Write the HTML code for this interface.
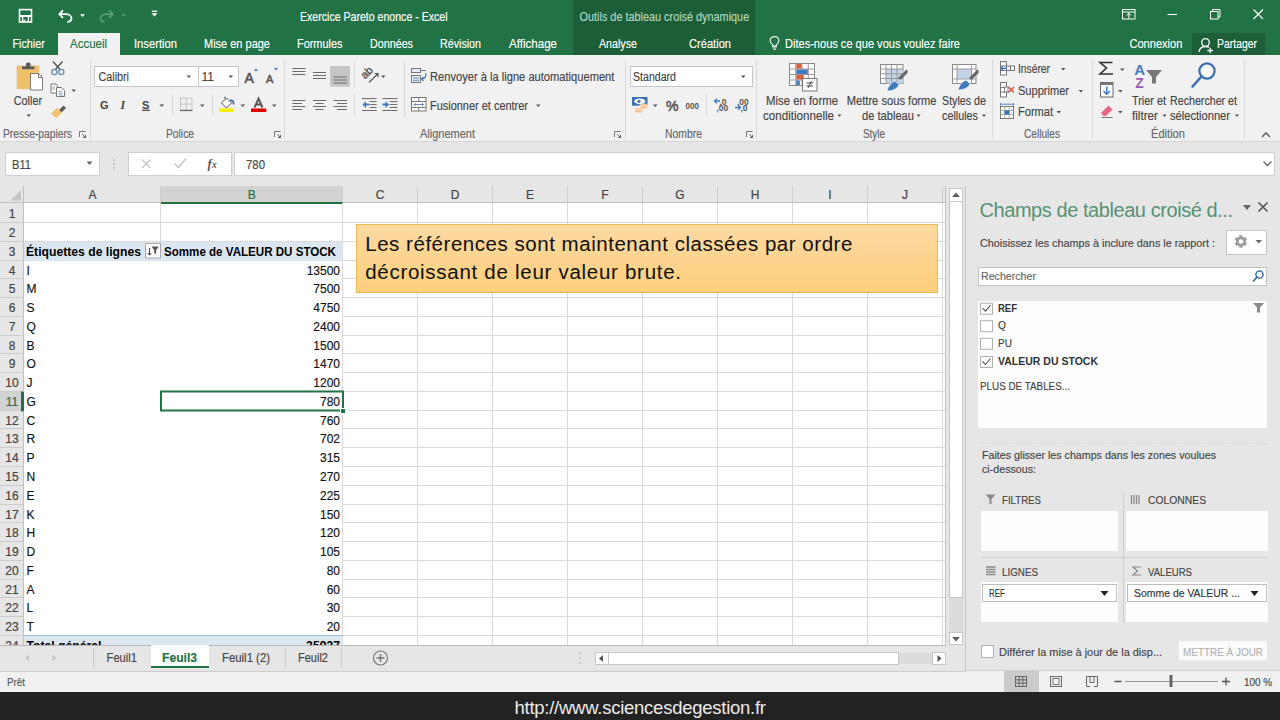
<!DOCTYPE html>
<html><head><meta charset="utf-8">
<style>
*{margin:0;padding:0}
html,body{width:1280px;height:720px;overflow:hidden;background:#e6e6e6}
svg{display:block;font-family:"Liberation Sans",sans-serif}
</style></head><body>
<svg width="1280" height="720" viewBox="0 0 1280 720">
<rect x="0" y="0" width="1280" height="55" fill="#217346"/>
<rect x="573.5" y="0" width="181.5" height="55" fill="#1b5e37"/>
<rect x="58" y="33" width="62" height="22" fill="#f1f1f1"/>
<rect x="1192" y="33" width="73" height="22" fill="#1b5e37"/>
<text x="300.00" y="21.00" font-size="12.5" fill="#ffffff" font-weight="normal" font-style="normal" textLength="147.52" lengthAdjust="spacingAndGlyphs" stroke="#ffffff" stroke-width="0.15">Exercice Pareto enonce - Excel</text>
<text x="579.60" y="20.70" font-size="12" fill="#b3d9c0" font-weight="normal" font-style="normal" textLength="169.61" lengthAdjust="spacingAndGlyphs" stroke="#b3d9c0" stroke-width="0.15">Outils de tableau croisé dynamique</text>
<text x="12.50" y="47.70" font-size="12.5" fill="#ffffff" font-weight="normal" font-style="normal" textLength="32.26" lengthAdjust="spacingAndGlyphs" stroke="#ffffff" stroke-width="0.15">Fichier</text>
<text x="134.00" y="47.70" font-size="12.5" fill="#ffffff" font-weight="normal" font-style="normal" textLength="43.01" lengthAdjust="spacingAndGlyphs" stroke="#ffffff" stroke-width="0.15">Insertion</text>
<text x="204.00" y="47.70" font-size="12.5" fill="#ffffff" font-weight="normal" font-style="normal" textLength="65.99" lengthAdjust="spacingAndGlyphs" stroke="#ffffff" stroke-width="0.15">Mise en page</text>
<text x="297.00" y="47.70" font-size="12.5" fill="#ffffff" font-weight="normal" font-style="normal" textLength="45.47" lengthAdjust="spacingAndGlyphs" stroke="#ffffff" stroke-width="0.15">Formules</text>
<text x="370.00" y="47.70" font-size="12.5" fill="#ffffff" font-weight="normal" font-style="normal" textLength="42.98" lengthAdjust="spacingAndGlyphs" stroke="#ffffff" stroke-width="0.15">Données</text>
<text x="440.00" y="47.70" font-size="12.5" fill="#ffffff" font-weight="normal" font-style="normal" textLength="41.00" lengthAdjust="spacingAndGlyphs" stroke="#ffffff" stroke-width="0.15">Révision</text>
<text x="509.00" y="47.70" font-size="12.5" fill="#ffffff" font-weight="normal" font-style="normal" textLength="48.02" lengthAdjust="spacingAndGlyphs" stroke="#ffffff" stroke-width="0.15">Affichage</text>
<text x="599.00" y="47.70" font-size="12.5" fill="#ffffff" font-weight="normal" font-style="normal" textLength="37.98" lengthAdjust="spacingAndGlyphs" stroke="#ffffff" stroke-width="0.15">Analyse</text>
<text x="689.00" y="47.70" font-size="12.5" fill="#ffffff" font-weight="normal" font-style="normal" textLength="42.00" lengthAdjust="spacingAndGlyphs" stroke="#ffffff" stroke-width="0.15">Création</text>
<text x="1129.50" y="47.70" font-size="12.5" fill="#ffffff" font-weight="normal" font-style="normal" textLength="52.82" lengthAdjust="spacingAndGlyphs" stroke="#ffffff" stroke-width="0.15">Connexion</text>
<text x="1217.00" y="47.70" font-size="12.5" fill="#ffffff" font-weight="normal" font-style="normal" textLength="40.01" lengthAdjust="spacingAndGlyphs" stroke="#ffffff" stroke-width="0.15">Partager</text>
<text x="70.00" y="47.70" font-size="12.5" fill="#217346" font-weight="normal" font-style="normal" textLength="36.99" lengthAdjust="spacingAndGlyphs" stroke="#217346" stroke-width="0.15">Accueil</text>
<text x="785.00" y="47.70" font-size="12.5" fill="#ffffff" font-weight="normal" font-style="normal" textLength="175.02" lengthAdjust="spacingAndGlyphs" stroke="#ffffff" stroke-width="0.15">Dites-nous ce que vous voulez faire</text>
<rect x="0" y="55" width="1280" height="86" fill="#f1f1f1"/>
<line x1="0" y1="141.5" x2="1280" y2="141.5" stroke="#d6d6d6" stroke-width="1"/>
<line x1="90.5" y1="60" x2="90.5" y2="139" stroke="#dadada" stroke-width="1"/>
<line x1="284.5" y1="60" x2="284.5" y2="139" stroke="#dadada" stroke-width="1"/>
<line x1="625.5" y1="60" x2="625.5" y2="139" stroke="#dadada" stroke-width="1"/>
<line x1="756.5" y1="60" x2="756.5" y2="139" stroke="#dadada" stroke-width="1"/>
<line x1="992.5" y1="60" x2="992.5" y2="139" stroke="#dadada" stroke-width="1"/>
<line x1="1092.5" y1="60" x2="1092.5" y2="139" stroke="#dadada" stroke-width="1"/>
<line x1="1244.5" y1="60" x2="1244.5" y2="139" stroke="#dadada" stroke-width="1"/>
<text x="3.00" y="137.50" font-size="12" fill="#666666" font-weight="normal" font-style="normal" textLength="69.00" lengthAdjust="spacingAndGlyphs" stroke="#666666" stroke-width="0.15">Presse-papiers</text>
<text x="166.00" y="137.50" font-size="12" fill="#666666" font-weight="normal" font-style="normal" textLength="27.99" lengthAdjust="spacingAndGlyphs" stroke="#666666" stroke-width="0.15">Police</text>
<text x="420.00" y="137.50" font-size="12" fill="#666666" font-weight="normal" font-style="normal" textLength="54.98" lengthAdjust="spacingAndGlyphs" stroke="#666666" stroke-width="0.15">Alignement</text>
<text x="665.00" y="137.50" font-size="12" fill="#666666" font-weight="normal" font-style="normal" textLength="37.02" lengthAdjust="spacingAndGlyphs" stroke="#666666" stroke-width="0.15">Nombre</text>
<text x="863.00" y="137.50" font-size="12" fill="#666666" font-weight="normal" font-style="normal" textLength="21.98" lengthAdjust="spacingAndGlyphs" stroke="#666666" stroke-width="0.15">Style</text>
<text x="1024.00" y="137.50" font-size="12" fill="#666666" font-weight="normal" font-style="normal" textLength="36.02" lengthAdjust="spacingAndGlyphs" stroke="#666666" stroke-width="0.15">Cellules</text>
<text x="1151.00" y="137.50" font-size="12" fill="#666666" font-weight="normal" font-style="normal" textLength="33.97" lengthAdjust="spacingAndGlyphs" stroke="#666666" stroke-width="0.15">Édition</text>
<rect x="94.5" y="66.5" width="104" height="20" fill="#ffffff" stroke="#c6c6c6"/>
<rect x="198.5" y="66.5" width="40" height="20" fill="#ffffff" stroke="#c6c6c6"/>
<rect x="630.5" y="66.5" width="122" height="20" fill="#ffffff" stroke="#c6c6c6"/>
<text x="98.50" y="80.50" font-size="12" fill="#444444" font-weight="normal" font-style="normal" textLength="30.49" lengthAdjust="spacingAndGlyphs" stroke="#444444" stroke-width="0.15">Calibri</text>
<text x="201.50" y="80.50" font-size="12" fill="#444444" font-weight="normal" font-style="normal" textLength="12.46" lengthAdjust="spacingAndGlyphs" stroke="#444444" stroke-width="0.15">11</text>
<text x="633.00" y="80.50" font-size="12" fill="#444444" font-weight="normal" font-style="normal" textLength="42.99" lengthAdjust="spacingAndGlyphs" stroke="#444444" stroke-width="0.15">Standard</text>
<text x="13.75" y="104.70" font-size="12" fill="#444444" font-weight="normal" font-style="normal" textLength="28.27" lengthAdjust="spacingAndGlyphs" stroke="#444444" stroke-width="0.15">Coller</text>
<text x="430.00" y="80.80" font-size="12" fill="#444444" font-weight="normal" font-style="normal" textLength="184.41" lengthAdjust="spacingAndGlyphs" stroke="#444444" stroke-width="0.15">Renvoyer à la ligne automatiquement</text>
<text x="430.00" y="109.70" font-size="12" fill="#444444" font-weight="normal" font-style="normal" textLength="97.99" lengthAdjust="spacingAndGlyphs" stroke="#444444" stroke-width="0.15">Fusionner et centrer</text>
<text x="766.00" y="104.80" font-size="12" fill="#444444" font-weight="normal" font-style="normal" textLength="72.01" lengthAdjust="spacingAndGlyphs" stroke="#444444" stroke-width="0.15">Mise en forme</text>
<text x="763.00" y="119.50" font-size="12" fill="#444444" font-weight="normal" font-style="normal" textLength="71.01" lengthAdjust="spacingAndGlyphs" stroke="#444444" stroke-width="0.15">conditionnelle</text>
<text x="846.70" y="104.80" font-size="12" fill="#444444" font-weight="normal" font-style="normal" textLength="89.88" lengthAdjust="spacingAndGlyphs" stroke="#444444" stroke-width="0.15">Mettre sous forme</text>
<text x="862.00" y="119.50" font-size="12" fill="#444444" font-weight="normal" font-style="normal" textLength="52.01" lengthAdjust="spacingAndGlyphs" stroke="#444444" stroke-width="0.15">de tableau</text>
<text x="942.00" y="104.80" font-size="12" fill="#444444" font-weight="normal" font-style="normal" textLength="43.98" lengthAdjust="spacingAndGlyphs" stroke="#444444" stroke-width="0.15">Styles de</text>
<text x="942.00" y="119.50" font-size="12" fill="#444444" font-weight="normal" font-style="normal" textLength="36.00" lengthAdjust="spacingAndGlyphs" stroke="#444444" stroke-width="0.15">cellules</text>
<text x="1018.00" y="72.80" font-size="12" fill="#444444" font-weight="normal" font-style="normal" textLength="32.02" lengthAdjust="spacingAndGlyphs" stroke="#444444" stroke-width="0.15">Insérer</text>
<text x="1018.00" y="94.50" font-size="12" fill="#444444" font-weight="normal" font-style="normal" textLength="50.98" lengthAdjust="spacingAndGlyphs" stroke="#444444" stroke-width="0.15">Supprimer</text>
<text x="1018.00" y="116.00" font-size="12" fill="#444444" font-weight="normal" font-style="normal" textLength="35.02" lengthAdjust="spacingAndGlyphs" stroke="#444444" stroke-width="0.15">Format</text>
<text x="1132.00" y="104.80" font-size="12" fill="#444444" font-weight="normal" font-style="normal" textLength="34.00" lengthAdjust="spacingAndGlyphs" stroke="#444444" stroke-width="0.15">Trier et</text>
<text x="1132.00" y="119.50" font-size="12" fill="#444444" font-weight="normal" font-style="normal" textLength="26.03" lengthAdjust="spacingAndGlyphs" stroke="#444444" stroke-width="0.15">filtrer</text>
<text x="1170.00" y="104.80" font-size="12" fill="#444444" font-weight="normal" font-style="normal" textLength="67.01" lengthAdjust="spacingAndGlyphs" stroke="#444444" stroke-width="0.15">Rechercher et</text>
<text x="1170.00" y="119.50" font-size="12" fill="#444444" font-weight="normal" font-style="normal" textLength="60.03" lengthAdjust="spacingAndGlyphs" stroke="#444444" stroke-width="0.15">sélectionner</text>
<rect x="0" y="142" width="1280" height="44" fill="#e6e6e6"/>
<rect x="5.5" y="152.5" width="94" height="23" fill="#ffffff" stroke="#d0d0d0"/>
<rect x="128.5" y="152.5" width="103" height="23" fill="#ffffff" stroke="#d0d0d0"/>
<rect x="234.5" y="152.5" width="1040" height="23" fill="#ffffff" stroke="#d0d0d0"/>
<text x="12.00" y="168.50" font-size="12.5" fill="#444444" font-weight="normal" font-style="normal" textLength="19.00" lengthAdjust="spacingAndGlyphs" stroke="#444444" stroke-width="0.15">B11</text>
<text x="246.00" y="168.50" font-size="12.5" fill="#444444" font-weight="normal" font-style="normal" textLength="18.98" lengthAdjust="spacingAndGlyphs" stroke="#444444" stroke-width="0.15">780</text>
<rect x="0" y="186" width="946" height="459" fill="#ffffff"/>
<rect x="0" y="186" width="946" height="17" fill="#e6e6e6"/>
<rect x="161" y="186" width="181.5" height="17" fill="#d2d2d2"/>
<line x1="160.5" y1="186" x2="160.5" y2="203" stroke="#cfcfcf" stroke-width="1"/>
<line x1="342.5" y1="186" x2="342.5" y2="203" stroke="#cfcfcf" stroke-width="1"/>
<line x1="417.5" y1="186" x2="417.5" y2="203" stroke="#cfcfcf" stroke-width="1"/>
<line x1="492.5" y1="186" x2="492.5" y2="203" stroke="#cfcfcf" stroke-width="1"/>
<line x1="567.5" y1="186" x2="567.5" y2="203" stroke="#cfcfcf" stroke-width="1"/>
<line x1="642.5" y1="186" x2="642.5" y2="203" stroke="#cfcfcf" stroke-width="1"/>
<line x1="717.5" y1="186" x2="717.5" y2="203" stroke="#cfcfcf" stroke-width="1"/>
<line x1="792.5" y1="186" x2="792.5" y2="203" stroke="#cfcfcf" stroke-width="1"/>
<line x1="867.5" y1="186" x2="867.5" y2="203" stroke="#cfcfcf" stroke-width="1"/>
<line x1="942.5" y1="186" x2="942.5" y2="203" stroke="#cfcfcf" stroke-width="1"/>
<line x1="0" y1="202.5" x2="946" y2="202.5" stroke="#bdbdbd" stroke-width="1"/>
<line x1="161" y1="203" x2="342.5" y2="203" stroke="#217346" stroke-width="2"/>
<text x="92.5" y="199" font-size="12" fill="#444" stroke="#444" stroke-width="0.2" text-anchor="middle">A</text>
<text x="251.75" y="199" font-size="12" fill="#217346" stroke="#217346" stroke-width="0.2" text-anchor="middle">B</text>
<text x="380.0" y="199" font-size="12" fill="#444" stroke="#444" stroke-width="0.2" text-anchor="middle">C</text>
<text x="455.0" y="199" font-size="12" fill="#444" stroke="#444" stroke-width="0.2" text-anchor="middle">D</text>
<text x="530.0" y="199" font-size="12" fill="#444" stroke="#444" stroke-width="0.2" text-anchor="middle">E</text>
<text x="605.0" y="199" font-size="12" fill="#444" stroke="#444" stroke-width="0.2" text-anchor="middle">F</text>
<text x="680.0" y="199" font-size="12" fill="#444" stroke="#444" stroke-width="0.2" text-anchor="middle">G</text>
<text x="755.0" y="199" font-size="12" fill="#444" stroke="#444" stroke-width="0.2" text-anchor="middle">H</text>
<text x="830.0" y="199" font-size="12" fill="#444" stroke="#444" stroke-width="0.2" text-anchor="middle">I</text>
<text x="905.0" y="199" font-size="12" fill="#444" stroke="#444" stroke-width="0.2" text-anchor="middle">J</text>
<rect x="0" y="203" width="24" height="442" fill="#e6e6e6"/>
<line x1="23.5" y1="186" x2="23.5" y2="645" stroke="#c0c0c0" stroke-width="1"/>
<path d="M10.5 200.5 L21 190 L21 200.5 Z" fill="#c4c4c4"/>
<rect x="0" y="392" width="23" height="19" fill="#d2d2d2"/>
<line x1="0" y1="222.5" x2="23" y2="222.5" stroke="#cdcdcd" stroke-width="1"/>
<line x1="24" y1="222.5" x2="946" y2="222.5" stroke="#dadada" stroke-width="1"/>
<line x1="0" y1="241.5" x2="23" y2="241.5" stroke="#cdcdcd" stroke-width="1"/>
<line x1="24" y1="241.5" x2="946" y2="241.5" stroke="#dadada" stroke-width="1"/>
<line x1="0" y1="260.5" x2="23" y2="260.5" stroke="#cdcdcd" stroke-width="1"/>
<line x1="342.5" y1="260.5" x2="946" y2="260.5" stroke="#dadada" stroke-width="1"/>
<line x1="0" y1="278.5" x2="23" y2="278.5" stroke="#cdcdcd" stroke-width="1"/>
<line x1="342.5" y1="278.5" x2="946" y2="278.5" stroke="#dadada" stroke-width="1"/>
<line x1="0" y1="297.5" x2="23" y2="297.5" stroke="#cdcdcd" stroke-width="1"/>
<line x1="342.5" y1="297.5" x2="946" y2="297.5" stroke="#dadada" stroke-width="1"/>
<line x1="0" y1="316.5" x2="23" y2="316.5" stroke="#cdcdcd" stroke-width="1"/>
<line x1="342.5" y1="316.5" x2="946" y2="316.5" stroke="#dadada" stroke-width="1"/>
<line x1="0" y1="335.5" x2="23" y2="335.5" stroke="#cdcdcd" stroke-width="1"/>
<line x1="342.5" y1="335.5" x2="946" y2="335.5" stroke="#dadada" stroke-width="1"/>
<line x1="0" y1="353.5" x2="23" y2="353.5" stroke="#cdcdcd" stroke-width="1"/>
<line x1="342.5" y1="353.5" x2="946" y2="353.5" stroke="#dadada" stroke-width="1"/>
<line x1="0" y1="372.5" x2="23" y2="372.5" stroke="#cdcdcd" stroke-width="1"/>
<line x1="342.5" y1="372.5" x2="946" y2="372.5" stroke="#dadada" stroke-width="1"/>
<line x1="0" y1="391.5" x2="23" y2="391.5" stroke="#cdcdcd" stroke-width="1"/>
<line x1="342.5" y1="391.5" x2="946" y2="391.5" stroke="#dadada" stroke-width="1"/>
<line x1="0" y1="410.5" x2="23" y2="410.5" stroke="#cdcdcd" stroke-width="1"/>
<line x1="342.5" y1="410.5" x2="946" y2="410.5" stroke="#dadada" stroke-width="1"/>
<line x1="0" y1="428.5" x2="23" y2="428.5" stroke="#cdcdcd" stroke-width="1"/>
<line x1="342.5" y1="428.5" x2="946" y2="428.5" stroke="#dadada" stroke-width="1"/>
<line x1="0" y1="447.5" x2="23" y2="447.5" stroke="#cdcdcd" stroke-width="1"/>
<line x1="342.5" y1="447.5" x2="946" y2="447.5" stroke="#dadada" stroke-width="1"/>
<line x1="0" y1="466.5" x2="23" y2="466.5" stroke="#cdcdcd" stroke-width="1"/>
<line x1="342.5" y1="466.5" x2="946" y2="466.5" stroke="#dadada" stroke-width="1"/>
<line x1="0" y1="485.5" x2="23" y2="485.5" stroke="#cdcdcd" stroke-width="1"/>
<line x1="342.5" y1="485.5" x2="946" y2="485.5" stroke="#dadada" stroke-width="1"/>
<line x1="0" y1="504.5" x2="23" y2="504.5" stroke="#cdcdcd" stroke-width="1"/>
<line x1="342.5" y1="504.5" x2="946" y2="504.5" stroke="#dadada" stroke-width="1"/>
<line x1="0" y1="522.5" x2="23" y2="522.5" stroke="#cdcdcd" stroke-width="1"/>
<line x1="342.5" y1="522.5" x2="946" y2="522.5" stroke="#dadada" stroke-width="1"/>
<line x1="0" y1="541.5" x2="23" y2="541.5" stroke="#cdcdcd" stroke-width="1"/>
<line x1="342.5" y1="541.5" x2="946" y2="541.5" stroke="#dadada" stroke-width="1"/>
<line x1="0" y1="560.5" x2="23" y2="560.5" stroke="#cdcdcd" stroke-width="1"/>
<line x1="342.5" y1="560.5" x2="946" y2="560.5" stroke="#dadada" stroke-width="1"/>
<line x1="0" y1="579.5" x2="23" y2="579.5" stroke="#cdcdcd" stroke-width="1"/>
<line x1="342.5" y1="579.5" x2="946" y2="579.5" stroke="#dadada" stroke-width="1"/>
<line x1="0" y1="597.5" x2="23" y2="597.5" stroke="#cdcdcd" stroke-width="1"/>
<line x1="342.5" y1="597.5" x2="946" y2="597.5" stroke="#dadada" stroke-width="1"/>
<line x1="0" y1="616.5" x2="23" y2="616.5" stroke="#cdcdcd" stroke-width="1"/>
<line x1="342.5" y1="616.5" x2="946" y2="616.5" stroke="#dadada" stroke-width="1"/>
<line x1="0" y1="635.5" x2="23" y2="635.5" stroke="#cdcdcd" stroke-width="1"/>
<line x1="342.5" y1="635.5" x2="946" y2="635.5" stroke="#dadada" stroke-width="1"/>
<line x1="0" y1="654.5" x2="23" y2="654.5" stroke="#cdcdcd" stroke-width="1"/>
<line x1="342.5" y1="654.5" x2="946" y2="654.5" stroke="#dadada" stroke-width="1"/>
<line x1="160.5" y1="203" x2="160.5" y2="242" stroke="#dadada" stroke-width="1"/>
<line x1="342.5" y1="203" x2="342.5" y2="645" stroke="#dadada" stroke-width="1"/>
<line x1="417.5" y1="203" x2="417.5" y2="645" stroke="#dadada" stroke-width="1"/>
<line x1="492.5" y1="203" x2="492.5" y2="645" stroke="#dadada" stroke-width="1"/>
<line x1="567.5" y1="203" x2="567.5" y2="645" stroke="#dadada" stroke-width="1"/>
<line x1="642.5" y1="203" x2="642.5" y2="645" stroke="#dadada" stroke-width="1"/>
<line x1="717.5" y1="203" x2="717.5" y2="645" stroke="#dadada" stroke-width="1"/>
<line x1="792.5" y1="203" x2="792.5" y2="645" stroke="#dadada" stroke-width="1"/>
<line x1="867.5" y1="203" x2="867.5" y2="645" stroke="#dadada" stroke-width="1"/>
<line x1="942.5" y1="203" x2="942.5" y2="645" stroke="#dadada" stroke-width="1"/>
<line x1="22" y1="391.5" x2="22" y2="411.5" stroke="#217346" stroke-width="2"/>
<rect x="24" y="242" width="318.5" height="19" fill="#dce6f1"/>
<rect x="24" y="636" width="318.5" height="9" fill="#dce6f1"/>
<line x1="24" y1="635.5" x2="342.5" y2="635.5" stroke="#9fb9d9" stroke-width="1"/>
<text x="12" y="218.20" font-size="12" fill="#444" stroke="#444" stroke-width="0.2" text-anchor="middle">1</text>
<text x="12" y="236.97" font-size="12" fill="#444" stroke="#444" stroke-width="0.2" text-anchor="middle">2</text>
<text x="12" y="255.74" font-size="12" fill="#444" stroke="#444" stroke-width="0.2" text-anchor="middle">3</text>
<text x="12" y="274.51" font-size="12" fill="#444" stroke="#444" stroke-width="0.2" text-anchor="middle">4</text>
<text x="12" y="293.28" font-size="12" fill="#444" stroke="#444" stroke-width="0.2" text-anchor="middle">5</text>
<text x="12" y="312.05" font-size="12" fill="#444" stroke="#444" stroke-width="0.2" text-anchor="middle">6</text>
<text x="12" y="330.82" font-size="12" fill="#444" stroke="#444" stroke-width="0.2" text-anchor="middle">7</text>
<text x="12" y="349.59" font-size="12" fill="#444" stroke="#444" stroke-width="0.2" text-anchor="middle">8</text>
<text x="12" y="368.36" font-size="12" fill="#444" stroke="#444" stroke-width="0.2" text-anchor="middle">9</text>
<text x="12" y="387.13" font-size="12" fill="#444" stroke="#444" stroke-width="0.2" text-anchor="middle">10</text>
<text x="12" y="405.90" font-size="12" fill="#2f6b49" stroke="#2f6b49" stroke-width="0.2" text-anchor="middle">11</text>
<text x="12" y="424.67" font-size="12" fill="#444" stroke="#444" stroke-width="0.2" text-anchor="middle">12</text>
<text x="12" y="443.44" font-size="12" fill="#444" stroke="#444" stroke-width="0.2" text-anchor="middle">13</text>
<text x="12" y="462.21" font-size="12" fill="#444" stroke="#444" stroke-width="0.2" text-anchor="middle">14</text>
<text x="12" y="480.98" font-size="12" fill="#444" stroke="#444" stroke-width="0.2" text-anchor="middle">15</text>
<text x="12" y="499.75" font-size="12" fill="#444" stroke="#444" stroke-width="0.2" text-anchor="middle">16</text>
<text x="12" y="518.52" font-size="12" fill="#444" stroke="#444" stroke-width="0.2" text-anchor="middle">17</text>
<text x="12" y="537.29" font-size="12" fill="#444" stroke="#444" stroke-width="0.2" text-anchor="middle">18</text>
<text x="12" y="556.06" font-size="12" fill="#444" stroke="#444" stroke-width="0.2" text-anchor="middle">19</text>
<text x="12" y="574.83" font-size="12" fill="#444" stroke="#444" stroke-width="0.2" text-anchor="middle">20</text>
<text x="12" y="593.60" font-size="12" fill="#444" stroke="#444" stroke-width="0.2" text-anchor="middle">21</text>
<text x="12" y="612.37" font-size="12" fill="#444" stroke="#444" stroke-width="0.2" text-anchor="middle">22</text>
<text x="12" y="631.14" font-size="12" fill="#444" stroke="#444" stroke-width="0.2" text-anchor="middle">23</text>
<text x="12" y="649.91" font-size="12" fill="#444" stroke="#444" stroke-width="0.2" text-anchor="middle">24</text>
<text x="26.00" y="255.74" font-size="12.2" fill="#000" font-weight="bold" font-style="normal" textLength="115.02" lengthAdjust="spacingAndGlyphs">Étiquettes de lignes</text>
<text x="164.00" y="255.74" font-size="12.2" fill="#000" font-weight="bold" font-style="normal" textLength="171.99" lengthAdjust="spacingAndGlyphs">Somme de VALEUR DU STOCK</text>
<rect x="145.5" y="243.5" width="15" height="14.5" fill="#fbfbfb" stroke="#a9a9a9"/>
<text x="26.5" y="274.51" font-size="12" fill="#111" stroke="#111" stroke-width="0.15">I</text>
<text x="340" y="274.51" font-size="12" fill="#111" stroke="#111" stroke-width="0.15" text-anchor="end">13500</text>
<text x="26.5" y="293.28" font-size="12" fill="#111" stroke="#111" stroke-width="0.15">M</text>
<text x="340" y="293.28" font-size="12" fill="#111" stroke="#111" stroke-width="0.15" text-anchor="end">7500</text>
<text x="26.5" y="312.05" font-size="12" fill="#111" stroke="#111" stroke-width="0.15">S</text>
<text x="340" y="312.05" font-size="12" fill="#111" stroke="#111" stroke-width="0.15" text-anchor="end">4750</text>
<text x="26.5" y="330.82" font-size="12" fill="#111" stroke="#111" stroke-width="0.15">Q</text>
<text x="340" y="330.82" font-size="12" fill="#111" stroke="#111" stroke-width="0.15" text-anchor="end">2400</text>
<text x="26.5" y="349.59" font-size="12" fill="#111" stroke="#111" stroke-width="0.15">B</text>
<text x="340" y="349.59" font-size="12" fill="#111" stroke="#111" stroke-width="0.15" text-anchor="end">1500</text>
<text x="26.5" y="368.36" font-size="12" fill="#111" stroke="#111" stroke-width="0.15">O</text>
<text x="340" y="368.36" font-size="12" fill="#111" stroke="#111" stroke-width="0.15" text-anchor="end">1470</text>
<text x="26.5" y="387.13" font-size="12" fill="#111" stroke="#111" stroke-width="0.15">J</text>
<text x="340" y="387.13" font-size="12" fill="#111" stroke="#111" stroke-width="0.15" text-anchor="end">1200</text>
<text x="26.5" y="405.90" font-size="12" fill="#111" stroke="#111" stroke-width="0.15">G</text>
<text x="340" y="405.90" font-size="12" fill="#111" stroke="#111" stroke-width="0.15" text-anchor="end">780</text>
<text x="26.5" y="424.67" font-size="12" fill="#111" stroke="#111" stroke-width="0.15">C</text>
<text x="340" y="424.67" font-size="12" fill="#111" stroke="#111" stroke-width="0.15" text-anchor="end">760</text>
<text x="26.5" y="443.44" font-size="12" fill="#111" stroke="#111" stroke-width="0.15">R</text>
<text x="340" y="443.44" font-size="12" fill="#111" stroke="#111" stroke-width="0.15" text-anchor="end">702</text>
<text x="26.5" y="462.21" font-size="12" fill="#111" stroke="#111" stroke-width="0.15">P</text>
<text x="340" y="462.21" font-size="12" fill="#111" stroke="#111" stroke-width="0.15" text-anchor="end">315</text>
<text x="26.5" y="480.98" font-size="12" fill="#111" stroke="#111" stroke-width="0.15">N</text>
<text x="340" y="480.98" font-size="12" fill="#111" stroke="#111" stroke-width="0.15" text-anchor="end">270</text>
<text x="26.5" y="499.75" font-size="12" fill="#111" stroke="#111" stroke-width="0.15">E</text>
<text x="340" y="499.75" font-size="12" fill="#111" stroke="#111" stroke-width="0.15" text-anchor="end">225</text>
<text x="26.5" y="518.52" font-size="12" fill="#111" stroke="#111" stroke-width="0.15">K</text>
<text x="340" y="518.52" font-size="12" fill="#111" stroke="#111" stroke-width="0.15" text-anchor="end">150</text>
<text x="26.5" y="537.29" font-size="12" fill="#111" stroke="#111" stroke-width="0.15">H</text>
<text x="340" y="537.29" font-size="12" fill="#111" stroke="#111" stroke-width="0.15" text-anchor="end">120</text>
<text x="26.5" y="556.06" font-size="12" fill="#111" stroke="#111" stroke-width="0.15">D</text>
<text x="340" y="556.06" font-size="12" fill="#111" stroke="#111" stroke-width="0.15" text-anchor="end">105</text>
<text x="26.5" y="574.83" font-size="12" fill="#111" stroke="#111" stroke-width="0.15">F</text>
<text x="340" y="574.83" font-size="12" fill="#111" stroke="#111" stroke-width="0.15" text-anchor="end">80</text>
<text x="26.5" y="593.60" font-size="12" fill="#111" stroke="#111" stroke-width="0.15">A</text>
<text x="340" y="593.60" font-size="12" fill="#111" stroke="#111" stroke-width="0.15" text-anchor="end">60</text>
<text x="26.5" y="612.37" font-size="12" fill="#111" stroke="#111" stroke-width="0.15">L</text>
<text x="340" y="612.37" font-size="12" fill="#111" stroke="#111" stroke-width="0.15" text-anchor="end">30</text>
<text x="26.5" y="631.14" font-size="12" fill="#111" stroke="#111" stroke-width="0.15">T</text>
<text x="340" y="631.14" font-size="12" fill="#111" stroke="#111" stroke-width="0.15" text-anchor="end">20</text>
<text x="26.5" y="649.91" font-size="12.2" fill="#000" font-weight="bold">Total général</text>
<text x="340" y="649.91" font-size="12.2" fill="#000" font-weight="bold" text-anchor="end">25937</text>
<rect x="161" y="391.5" width="182" height="19" fill="none" stroke="#217346" stroke-width="2"/>
<rect x="340.5" y="408.5" width="5" height="5" fill="#217346" stroke="#fff" stroke-width="1"/>
<line x1="23" y1="392" x2="23" y2="411" stroke="#217346" stroke-width="2"/>
<defs><linearGradient id="cg" x1="0" y1="0" x2="0" y2="1"><stop offset="0" stop-color="#fdd9a3"/><stop offset="1" stop-color="#fdcf7c"/></linearGradient></defs>
<rect x="356.5" y="224.5" width="581" height="68" fill="url(#cg)" stroke="#e9bb4e"/>
<text x="365.20" y="250.90" font-size="20.5" fill="#111" font-weight="normal" font-style="normal" textLength="487.15" lengthAdjust="spacing" stroke="#111" stroke-width="0.05">Les références sont maintenant classées par ordre</text>
<text x="365.20" y="278.70" font-size="20.5" fill="#111" font-weight="normal" font-style="normal" textLength="315.82" lengthAdjust="spacing" stroke="#111" stroke-width="0.05">décroissant de leur valeur brute.</text>
<rect x="946" y="186" width="20" height="459" fill="#e6e6e6"/>
<rect x="949.5" y="188.5" width="13" height="13" fill="#ffffff" stroke="#c6c6c6"/>
<rect x="949" y="201" width="14" height="432" fill="#dcdcdc"/>
<rect x="949.5" y="201.5" width="13" height="396" fill="#ffffff" stroke="#c6c6c6"/>
<rect x="949.5" y="632.5" width="13" height="12" fill="#ffffff" stroke="#c6c6c6"/>
<path d="M952 197 L956 192.5 L960 197 Z" fill="#606060"/>
<path d="M952 637 L956 641.5 L960 637 Z" fill="#606060"/>
<line x1="965.5" y1="186" x2="965.5" y2="670" stroke="#c6c6c6" stroke-width="1"/>
<rect x="966" y="186" width="314" height="484" fill="#e6e6e6"/>
<text x="979.50" y="217.40" font-size="20" fill="#579274" font-weight="normal" font-style="normal" textLength="253.51" lengthAdjust="spacing">Champs de tableau croisé d...</text>
<path d="M1243 205 L1251 205 L1247 210 Z" fill="#666"/>
<path d="M1258.5 202.5 L1267.5 211.5 M1267.5 202.5 L1258.5 211.5" stroke="#555" stroke-width="1.6"/>
<text x="980.00" y="246.70" font-size="11.2" fill="#444444" font-weight="normal" font-style="normal" textLength="234.98" lengthAdjust="spacingAndGlyphs" stroke="#444444" stroke-width="0.15">Choisissez les champs à inclure dans le rapport :</text>
<rect x="1226.5" y="230.5" width="40" height="24" fill="#ffffff" stroke="#c6c6c6"/>
<rect x="978.5" y="267.5" width="288" height="18" fill="#ffffff" stroke="#c0c0c0"/>
<text x="981.00" y="279.50" font-size="11.5" fill="#666" font-weight="normal" font-style="normal" textLength="54.99" lengthAdjust="spacingAndGlyphs" stroke="#666" stroke-width="0.15">Rechercher</text>
<rect x="978" y="301" width="289" height="127" fill="#fdfdfd"/>
<rect x="980.5" y="303.2" width="12" height="11" fill="#ffffff" stroke="#b0b0b0"/>
<path d="M982.5 308.2 L985.5 311.2 L990.5 305.2" fill="none" stroke="#555" stroke-width="1.1"/>
<text x="998.00" y="311.70" font-size="11.5" fill="#333" font-weight="bold" font-style="normal" textLength="19.00" lengthAdjust="spacingAndGlyphs">REF</text>
<rect x="980.5" y="320.7" width="12" height="11" fill="#ffffff" stroke="#b0b0b0"/>
<text x="998.00" y="329.20" font-size="11.5" fill="#444444" font-weight="normal" font-style="normal" textLength="7.98" lengthAdjust="spacingAndGlyphs" stroke="#444444" stroke-width="0.15">Q</text>
<rect x="980.5" y="338.3" width="12" height="11" fill="#ffffff" stroke="#b0b0b0"/>
<text x="998.00" y="346.80" font-size="11.5" fill="#444444" font-weight="normal" font-style="normal" textLength="13.99" lengthAdjust="spacingAndGlyphs" stroke="#444444" stroke-width="0.15">PU</text>
<rect x="980.5" y="356.5" width="12" height="11" fill="#ffffff" stroke="#b0b0b0"/>
<path d="M982.5 361.5 L985.5 364.5 L990.5 358.5" fill="none" stroke="#555" stroke-width="1.1"/>
<text x="998.00" y="365.00" font-size="11.5" fill="#333" font-weight="bold" font-style="normal" textLength="99.99" lengthAdjust="spacingAndGlyphs">VALEUR DU STOCK</text>
<text x="980.00" y="390.00" font-size="11.5" fill="#444444" font-weight="normal" font-style="normal" textLength="89.99" lengthAdjust="spacingAndGlyphs" stroke="#444444" stroke-width="0.15">PLUS DE TABLES...</text>
<line x1="980" y1="443.5" x2="1271" y2="443.5" stroke="#c8c8c8" stroke-width="1" stroke-dasharray="1,2"/>
<text x="982.00" y="458.75" font-size="11.5" fill="#444444" font-weight="normal" font-style="normal" textLength="234.00" lengthAdjust="spacingAndGlyphs" stroke="#444444" stroke-width="0.15">Faites glisser les champs dans les zones voulues</text>
<text x="982.00" y="472.50" font-size="11.5" fill="#444444" font-weight="normal" font-style="normal" textLength="53.98" lengthAdjust="spacingAndGlyphs" stroke="#444444" stroke-width="0.15">ci-dessous:</text>
<text x="1002.00" y="504.00" font-size="11.5" fill="#444444" font-weight="normal" font-style="normal" textLength="38.98" lengthAdjust="spacingAndGlyphs" stroke="#444444" stroke-width="0.15">FILTRES</text>
<text x="1148.00" y="504.00" font-size="11.5" fill="#444444" font-weight="normal" font-style="normal" textLength="58.03" lengthAdjust="spacingAndGlyphs" stroke="#444444" stroke-width="0.15">COLONNES</text>
<text x="1002.00" y="575.50" font-size="11.5" fill="#444444" font-weight="normal" font-style="normal" textLength="35.98" lengthAdjust="spacingAndGlyphs" stroke="#444444" stroke-width="0.15">LIGNES</text>
<text x="1148.00" y="575.50" font-size="11.5" fill="#444444" font-weight="normal" font-style="normal" textLength="43.99" lengthAdjust="spacingAndGlyphs" stroke="#444444" stroke-width="0.15">VALEURS</text>
<rect x="981" y="511" width="137" height="40" fill="#fdfdfd"/>
<rect x="1126" y="511" width="142" height="40" fill="#fdfdfd"/>
<rect x="981" y="582" width="137" height="40" fill="#fdfdfd"/>
<rect x="1126" y="582" width="142" height="40" fill="#fdfdfd"/>
<line x1="981" y1="557.5" x2="1268" y2="557.5" stroke="#cfcfcf" stroke-width="1"/>
<line x1="1123.5" y1="492" x2="1123.5" y2="622" stroke="#cdcdcd" stroke-width="1"/>
<rect x="982.5" y="584.5" width="134" height="17" fill="#ffffff" stroke="#bdbdbd"/>
<rect x="1127.5" y="584.5" width="139" height="17" fill="#ffffff" stroke="#bdbdbd"/>
<text x="989.00" y="597.00" font-size="11" fill="#333" font-weight="normal" font-style="normal" textLength="16.00" lengthAdjust="spacingAndGlyphs" stroke="#333" stroke-width="0.15">REF</text>
<text x="1134.00" y="597.00" font-size="11.5" fill="#333" font-weight="normal" font-style="normal" textLength="106.02" lengthAdjust="spacingAndGlyphs" stroke="#333" stroke-width="0.15">Somme de VALEUR ...</text>
<path d="M1100.5 591 L1108.5 591 L1104.5 596 Z" fill="#222"/>
<path d="M1250.5 591 L1258.5 591 L1254.5 596 Z" fill="#222"/>
<rect x="981.5" y="645.5" width="12" height="12" fill="#ffffff" stroke="#b0b0b0"/>
<text x="999.00" y="655.50" font-size="11.5" fill="#444444" font-weight="normal" font-style="normal" textLength="163.02" lengthAdjust="spacingAndGlyphs" stroke="#444444" stroke-width="0.15">Différer la mise à jour de la disp...</text>
<rect x="1179" y="641" width="88" height="19.5" fill="#fafafa"/>
<text x="1183.00" y="655.50" font-size="11.5" fill="#b4b4b4" font-weight="normal" font-style="normal" textLength="80.01" lengthAdjust="spacingAndGlyphs" stroke="#b4b4b4" stroke-width="0.15">METTRE À JOUR</text>
<rect x="0" y="645" width="966" height="26" fill="#e6e6e6"/>
<line x1="0" y1="645.5" x2="946" y2="645.5" stroke="#b8b8b8" stroke-width="1"/>
<rect x="151" y="645" width="58" height="22" fill="#ffffff"/>
<path d="M29 654.5 L25.5 658 L29 661.5 Z" fill="#c4c4c4"/><path d="M52.5 654.5 L56 658 L52.5 661.5 Z" fill="#c4c4c4"/>
<rect x="151" y="666" width="58" height="2" fill="#217346"/>
<line x1="93.8" y1="648" x2="93.8" y2="668" stroke="#c6c6c6" stroke-width="1"/>
<line x1="285.3" y1="648" x2="285.3" y2="668" stroke="#c6c6c6" stroke-width="1"/>
<line x1="341.6" y1="648" x2="341.6" y2="668" stroke="#c6c6c6" stroke-width="1"/>
<text x="106.60" y="662.00" font-size="12" fill="#444444" font-weight="normal" font-style="normal" textLength="30.39" lengthAdjust="spacingAndGlyphs" stroke="#444444" stroke-width="0.15">Feuil1</text>
<text x="162.00" y="662.00" font-size="12" fill="#217346" font-weight="bold" font-style="normal" textLength="35.00" lengthAdjust="spacingAndGlyphs" stroke="#217346" stroke-width="0.15">Feuil3</text>
<text x="222.00" y="662.00" font-size="12" fill="#444444" font-weight="normal" font-style="normal" textLength="47.99" lengthAdjust="spacingAndGlyphs" stroke="#444444" stroke-width="0.15">Feuil1 (2)</text>
<text x="298.00" y="662.00" font-size="12" fill="#444444" font-weight="normal" font-style="normal" textLength="29.99" lengthAdjust="spacingAndGlyphs" stroke="#444444" stroke-width="0.15">Feuil2</text>
<circle cx="380.5" cy="658" r="7" fill="none" stroke="#777" stroke-width="1.2"/><path d="M376.5 658 H384.5 M380.5 654 V662" stroke="#777" stroke-width="1.4"/>
<rect x="579.5" y="652.5" width="1.2" height="1.2" fill="#999"/>
<rect x="579.5" y="657.5" width="1.2" height="1.2" fill="#999"/>
<rect x="579.5" y="662.5" width="1.2" height="1.2" fill="#999"/>
<rect x="595.5" y="652.5" width="13" height="12" fill="#ffffff" stroke="#c6c6c6"/>
<rect x="608.5" y="652.5" width="290" height="12" fill="#ffffff" stroke="#c6c6c6"/>
<rect x="899" y="653" width="33" height="11" fill="#dcdcdc"/>
<rect x="932.5" y="652.5" width="13" height="12" fill="#ffffff" stroke="#c6c6c6"/>
<path d="M603 655 L599 658.5 L603 662 Z" fill="#555"/>
<path d="M937.5 655 L941.5 658.5 L937.5 662 Z" fill="#555"/>
<line x1="965.5" y1="186" x2="965.5" y2="671" stroke="#c6c6c6" stroke-width="1"/>
<line x1="945.5" y1="186" x2="945.5" y2="645" stroke="#c0c0c0" stroke-width="1"/>
<rect x="0" y="671" width="1280" height="21" fill="#f1f1f1"/>
<line x1="0" y1="671.5" x2="966" y2="671.5" stroke="#cccccc" stroke-width="1"/>
<line x1="966" y1="670.5" x2="1280" y2="670.5" stroke="#d0d0d0" stroke-width="1"/>
<text x="7.00" y="686.00" font-size="11.5" fill="#555" font-weight="normal" font-style="normal" textLength="17.99" lengthAdjust="spacingAndGlyphs" stroke="#555" stroke-width="0.15">Prêt</text>
<rect x="1004" y="671" width="35" height="21" fill="#cbcbcb"/>
<text x="1244.00" y="686.00" font-size="11.5" fill="#444444" font-weight="normal" font-style="normal" textLength="28.00" lengthAdjust="spacingAndGlyphs" stroke="#444444" stroke-width="0.15">100 %</text>
<line x1="1125" y1="681.5" x2="1218" y2="681.5" stroke="#999" stroke-width="1"/>
<rect x="1169.5" y="675" width="3" height="12" fill="#666"/>
<path d="M1114.5 681.5 H1121.5 M1222 681.5 H1230 M1226 677.5 V685.5" stroke="#555" stroke-width="1.3"/>
<rect x="0" y="692" width="1280" height="28" fill="#222222"/>
<text x="514.50" y="713.60" font-size="18.5" fill="#ececec" font-weight="normal" font-style="normal" textLength="251.54" lengthAdjust="spacing">http://www.sciencesdegestion.fr</text>
<rect x="19.5" y="9.6" width="12" height="12.4" fill="none" stroke="#fff" stroke-width="1.6"/>
<rect x="19.5" y="15" width="12" height="2" fill="#fff"/>
<path d="M22.6 17 V22 M28.4 17 V22" stroke="#fff" stroke-width="1.4"/><rect x="23.6" y="19.8" width="1.8" height="2.2" fill="#fff"/>
<path d="M62.5 10.8 L59.3 14.2 L62.5 17.4" fill="none" stroke="#fff" stroke-width="1.8" stroke-linejoin="round" stroke-linecap="round"/>
<path d="M60 14.2 H65.5 C69 14.2 71.5 16 71.5 18.3 C71.5 20.5 69.8 21.6 68 21.8" fill="none" stroke="#fff" stroke-width="1.8" stroke-linecap="round"/>
<path d="M80 14.2 L85 14.2 L82.5 17 Z" fill="#fff"/>
<path d="M109.5 10.8 L112.7 14.2 L109.5 17.4" fill="none" stroke="#5e9c77" stroke-width="1.8" stroke-linejoin="round" stroke-linecap="round"/>
<path d="M112 14.2 H106.5 C103 14.2 100.5 16 100.5 18.3 C100.5 20.5 102.2 21.6 104 21.8" fill="none" stroke="#5e9c77" stroke-width="1.8" stroke-linecap="round"/>
<path d="M121.5 14.2 L126 14.2 L123.75 16.8 Z" fill="#5e9c77"/>
<rect x="151.8" y="10.6" width="5.4" height="1.3" fill="#fff"/><path d="M151.5 13.2 L157.5 13.2 L154.5 16.6 Z" fill="#fff"/>
<rect x="1122.5" y="9.5" width="12.5" height="9.5" fill="none" stroke="#fff" stroke-width="1"/>
<path d="M1122.5 12 H1135" stroke="#fff" stroke-width="1"/><path d="M1128.8 18.5 V13.5 M1126.5 15.5 L1128.8 13.2 L1131 15.5" fill="none" stroke="#fff" stroke-width="1"/>
<path d="M1167.5 14.5 H1177" stroke="#fff" stroke-width="1.1"/>
<rect x="1210.5" y="11.5" width="7.5" height="7.5" fill="none" stroke="#fff" stroke-width="1"/><path d="M1212.5 11.5 V9.5 H1220 V17 H1218" fill="none" stroke="#fff" stroke-width="1"/>
<path d="M1253.5 9.5 L1263 19 M1263 9.5 L1253.5 19" stroke="#fff" stroke-width="1.1"/>
<circle cx="1205.5" cy="42.5" r="3.8" fill="none" stroke="#fff" stroke-width="1.3"/>
<path d="M1199 52 C1199.5 48 1202 46.5 1205.5 46.5 C1207 46.5 1208 46.8 1209 47.3" fill="none" stroke="#fff" stroke-width="1.3"/>
<path d="M1207.5 50.5 H1213 M1210.2 47.8 V53.2" stroke="#fff" stroke-width="1.3"/>
<path d="M772.8 47 V45 C771 43.8 770.2 42.2 770.2 40.5 C770.2 38 772.2 36.6 774.5 36.6 C776.8 36.6 778.8 38 778.8 40.5 C778.8 42.2 778 43.8 776.2 45 V47 Z" fill="none" stroke="#e8f3ec" stroke-width="1.2"/><path d="M772.8 46.2 H776.2 M773 49.2 H776" stroke="#e8f3ec" stroke-width="1.3"/>
<rect x="16.7" y="65.6" width="22.6" height="23.5" fill="#efc16b"/>
<rect x="22" y="66.4" width="12.4" height="2.8" fill="#5b5b5b"/><rect x="26" y="62.5" width="4.5" height="4.5" rx="1.5" fill="#5b5b5b"/>
<path d="M30.5 73.5 H38.5 L42.5 77.5 V90 H30.5 Z" fill="#fff" stroke="#7a7a7a" stroke-width="1"/><path d="M38.5 73.5 V77.5 H42.5" fill="none" stroke="#7a7a7a" stroke-width="1"/>
<path d="M26.5 114.5 L31 114.5 L28.75 117 Z" fill="#555"/>
<path d="M53 61.5 L60.5 70 M62.5 61.5 L55 70" stroke="#555" stroke-width="1.4"/>
<circle cx="54.3" cy="72" r="2.6" fill="none" stroke="#6a8cb4" stroke-width="1.3"/><circle cx="61.3" cy="72" r="2.6" fill="none" stroke="#6a8cb4" stroke-width="1.3"/>
<path d="M51 84 H56 L57.5 85.5 V93 H51 Z" fill="#fff" stroke="#777" stroke-width="1"/>
<path d="M56.5 87.5 H61.5 L64.5 90.5 V96.5 H56.5 Z" fill="#fff" stroke="#777" stroke-width="1"/>
<path d="M58.5 91.5 H62 M58.5 93.3 H62.5 M58.5 95 H62.5" stroke="#6a8cb4" stroke-width="0.8"/>
<path d="M52.5 87 H55 M52.5 89 H55" stroke="#777" stroke-width="0.8"/>
<path d="M71.5 89.5 L76 89.5 L73.75 92 Z" fill="#555"/>
<path d="M59 110 L63.5 105.5 L66 108 L61.5 112.5 Z" fill="#5b5b5b"/>
<path d="M51 113.5 L57 108 L62 113 L56 118 Z" fill="#efc16b"/>
<path d="M186.5 75.5 L191.1 75.5 L188.8 78.1 Z" fill="#555"/>
<path d="M228.5 75.5 L233.1 75.5 L230.8 78.1 Z" fill="#555"/>
<path d="M741 75.5 L745.6 75.5 L743.3 78.1 Z" fill="#555"/>
<text x="244.5" y="82.5" font-size="14" fill="#555" stroke="#555" stroke-width="0.6" font-family="Liberation Sans">A</text><path d="M254 71 L258 71 L256 68.5 Z" fill="#3e7bbf"/>
<text x="266" y="82.5" font-size="11" fill="#555" stroke="#555" stroke-width="0.5" font-family="Liberation Sans">A</text><path d="M274 68 L278 68 L276 70.5 Z" fill="#3e7bbf"/>
<text x="100" y="108.6" font-size="11" font-weight="bold" fill="#444" font-family="Liberation Sans">G</text>
<text x="120.5" y="108.6" font-size="12" font-weight="bold" font-style="italic" fill="#444" font-family="Liberation Serif">I</text>
<text x="142" y="108.6" font-size="11" font-weight="bold" fill="#444" font-family="Liberation Sans">S</text><rect x="142" y="109.7" width="8" height="1.2" fill="#444"/>
<path d="M159.5 104.5 L164.1 104.5 L161.8 107.1 Z" fill="#555"/>
<path d="M200 104.5 L204.6 104.5 L202.3 107.1 Z" fill="#555"/>
<path d="M240.5 104.5 L245.1 104.5 L242.8 107.1 Z" fill="#555"/>
<path d="M272 104.5 L276.6 104.5 L274.3 107.1 Z" fill="#555"/>
<line x1="172.5" y1="95" x2="172.5" y2="115" stroke="#d6d6d6" stroke-width="1"/>
<line x1="212.5" y1="95" x2="212.5" y2="115" stroke="#d6d6d6" stroke-width="1"/>
<rect x="180.5" y="98" width="11.5" height="12" fill="none" stroke="#9a9a9a" stroke-width="1" stroke-dasharray="1,1"/>
<line x1="186.25" y1="98" x2="186.25" y2="110" stroke="#9a9a9a" stroke-width="1" stroke-dasharray="1,1"/>
<line x1="180.5" y1="104" x2="192" y2="104" stroke="#9a9a9a" stroke-width="1" stroke-dasharray="1,1"/>
<line x1="180" y1="110.5" x2="192.5" y2="110.5" stroke="#666" stroke-width="1.2"/>
<path d="M221.5 103 L226.5 98 L231.5 103 L226.5 108 Z" fill="#fff" stroke="#555" stroke-width="1"/><path d="M225 99 V96.5" stroke="#555" stroke-width="1"/>
<path d="M230 100.5 C232.5 100 234 101.5 233.5 104.5" fill="none" stroke="#3e6fb0" stroke-width="1.8"/>
<rect x="219" y="108.4" width="14.8" height="3.5" fill="#f6f000"/>
<path d="M254.5 107.5 L258.5 98.5 L262.5 107.5 M256 104.5 H261" fill="none" stroke="#555" stroke-width="1.9"/>
<rect x="251" y="108.5" width="15.3" height="3.5" fill="#e00000"/>
<line x1="292.3" y1="68.5" x2="305.5" y2="68.5" stroke="#6b6b6b" stroke-width="1"/>
<line x1="292.3" y1="71.5" x2="305.5" y2="71.5" stroke="#6b6b6b" stroke-width="1"/>
<line x1="292.3" y1="74.5" x2="305.5" y2="74.5" stroke="#6b6b6b" stroke-width="1"/>
<line x1="313" y1="72.5" x2="326" y2="72.5" stroke="#6b6b6b" stroke-width="1"/>
<line x1="313" y1="75.5" x2="326" y2="75.5" stroke="#6b6b6b" stroke-width="1"/>
<line x1="313" y1="78.5" x2="326" y2="78.5" stroke="#6b6b6b" stroke-width="1"/>
<rect x="330" y="66" width="20" height="20.7" fill="#c6c6c6"/>
<line x1="333.5" y1="77" x2="347" y2="77" stroke="#6b6b6b" stroke-width="1"/>
<line x1="333.5" y1="80" x2="347" y2="80" stroke="#6b6b6b" stroke-width="1"/>
<line x1="333.5" y1="83" x2="347" y2="83" stroke="#6b6b6b" stroke-width="1"/>
<line x1="292.3" y1="100.5" x2="305.5" y2="100.5" stroke="#6b6b6b" stroke-width="1"/>
<line x1="313" y1="100.5" x2="326" y2="100.5" stroke="#6b6b6b" stroke-width="1"/>
<line x1="333.5" y1="100.5" x2="347" y2="100.5" stroke="#6b6b6b" stroke-width="1"/>
<line x1="292.3" y1="103.5" x2="302" y2="103.5" stroke="#6b6b6b" stroke-width="1"/>
<line x1="315.5" y1="103.5" x2="323.5" y2="103.5" stroke="#6b6b6b" stroke-width="1"/>
<line x1="337" y1="103.5" x2="347" y2="103.5" stroke="#6b6b6b" stroke-width="1"/>
<line x1="292.3" y1="106.5" x2="305.5" y2="106.5" stroke="#6b6b6b" stroke-width="1"/>
<line x1="313" y1="106.5" x2="326" y2="106.5" stroke="#6b6b6b" stroke-width="1"/>
<line x1="333.5" y1="106.5" x2="347" y2="106.5" stroke="#6b6b6b" stroke-width="1"/>
<line x1="292.3" y1="109.5" x2="302" y2="109.5" stroke="#6b6b6b" stroke-width="1"/>
<line x1="315.5" y1="109.5" x2="323.5" y2="109.5" stroke="#6b6b6b" stroke-width="1"/>
<line x1="337" y1="109.5" x2="347" y2="109.5" stroke="#6b6b6b" stroke-width="1"/>
<line x1="354.5" y1="62" x2="354.5" y2="88" stroke="#d6d6d6" stroke-width="1"/>
<line x1="354.5" y1="95" x2="354.5" y2="115" stroke="#d6d6d6" stroke-width="1"/>
<line x1="404.5" y1="62" x2="404.5" y2="117" stroke="#d6d6d6" stroke-width="1"/>
<text x="0" y="0" font-size="11" fill="#555" stroke="#555" stroke-width="0.4" font-family="Liberation Sans" transform="translate(365,79.5) rotate(-45)">ab</text>
<path d="M369 82.5 L378 73.5 M374.5 73.5 H378 V77" fill="none" stroke="#555" stroke-width="1.2"/>
<path d="M381 75.5 L385.6 75.5 L383.3 78.1 Z" fill="#555"/>
<line x1="362" y1="98.6" x2="376.6" y2="98.6" stroke="#6b6b6b" stroke-width="1"/>
<line x1="382.3" y1="98.6" x2="397.5" y2="98.6" stroke="#6b6b6b" stroke-width="1"/>
<line x1="362" y1="110.5" x2="376.6" y2="110.5" stroke="#6b6b6b" stroke-width="1"/>
<line x1="382.3" y1="110.5" x2="397.5" y2="110.5" stroke="#6b6b6b" stroke-width="1"/>
<line x1="369.5" y1="101.6" x2="376.6" y2="101.6" stroke="#6b6b6b" stroke-width="1"/>
<line x1="389.5" y1="101.6" x2="397.5" y2="101.6" stroke="#6b6b6b" stroke-width="1"/>
<line x1="369.5" y1="104.6" x2="376.6" y2="104.6" stroke="#6b6b6b" stroke-width="1"/>
<line x1="389.5" y1="104.6" x2="397.5" y2="104.6" stroke="#6b6b6b" stroke-width="1"/>
<line x1="369.5" y1="107.5" x2="376.6" y2="107.5" stroke="#6b6b6b" stroke-width="1"/>
<line x1="389.5" y1="107.5" x2="397.5" y2="107.5" stroke="#6b6b6b" stroke-width="1"/>
<path d="M362.5 104.6 L366 101.3 V103.6 H369 V105.6 H366 V107.9 Z" fill="#3e7bbf"/>
<path d="M389 104.6 L385.5 101.3 V103.6 H382.5 V105.6 H385.5 V107.9 Z" fill="#3e7bbf"/>
<rect x="411.5" y="68.5" width="9" height="4" fill="#e6eef8" stroke="#777" stroke-width="1"/>
<rect x="411.5" y="75.5" width="9" height="7" fill="#e6eef8" stroke="#777" stroke-width="1"/>
<line x1="420.5" y1="70.5" x2="426" y2="70.5" stroke="#777" stroke-width="1"/>
<line x1="413" y1="78" x2="419" y2="78" stroke="#6a8cb4" stroke-width="1"/>
<line x1="413" y1="80.3" x2="419" y2="80.3" stroke="#6a8cb4" stroke-width="1"/>
<path d="M425.5 73 C427 76 425 79 421.5 79 M423.5 77 L421.5 79 L423.5 81" fill="none" stroke="#3e7bbf" stroke-width="1.2"/>
<rect x="411.5" y="97.5" width="14.5" height="13.5" fill="#fff" stroke="#777" stroke-width="1"/>
<line x1="411.5" y1="101.5" x2="426" y2="101.5" stroke="#777" stroke-width="1"/>
<line x1="411.5" y1="107.5" x2="426" y2="107.5" stroke="#777" stroke-width="1"/>
<line x1="418.75" y1="97.5" x2="418.75" y2="101.5" stroke="#777" stroke-width="1"/>
<line x1="418.75" y1="107.5" x2="418.75" y2="111" stroke="#777" stroke-width="1"/>
<path d="M414 104.5 H423.5 M415.5 103 L414 104.5 L415.5 106 M422 103 L423.5 104.5 L422 106" fill="none" stroke="#6a8cb4" stroke-width="1"/>
<path d="M536 104.5 L540.6 104.5 L538.3 107.1 Z" fill="#555"/>
<path d="M79.5 137 V131.5 H85.5" fill="none" stroke="#777" stroke-width="1"/><path d="M82 134 L84.5 136.5" stroke="#777" stroke-width="1"/><path d="M86 134.5 V138 H82.5 Z" fill="#666"/>
<path d="M274.5 137 V131.5 H280.5" fill="none" stroke="#777" stroke-width="1"/><path d="M277 134 L279.5 136.5" stroke="#777" stroke-width="1"/><path d="M281 134.5 V138 H277.5 Z" fill="#666"/>
<path d="M614.5 137 V131.5 H620.5" fill="none" stroke="#777" stroke-width="1"/><path d="M617 134 L619.5 136.5" stroke="#777" stroke-width="1"/><path d="M621 134.5 V138 H617.5 Z" fill="#666"/>
<path d="M746.5 137 V131.5 H752.5" fill="none" stroke="#777" stroke-width="1"/><path d="M749 134 L751.5 136.5" stroke="#777" stroke-width="1"/><path d="M753 134.5 V138 H749.5 Z" fill="#666"/>
<rect x="632" y="97" width="15.5" height="8.7" fill="#3e6fb0"/><ellipse cx="639.8" cy="101.3" rx="5.5" ry="2.8" fill="#fff"/><circle cx="639" cy="101.3" r="1.6" fill="#3e6fb0"/>
<ellipse cx="643.5" cy="105.2" rx="4" ry="1.5" fill="#f4c08a" stroke="#fff" stroke-width="0.5"/><ellipse cx="643.5" cy="107.4" rx="4" ry="1.5" fill="#f4c08a" stroke="#fff" stroke-width="0.5"/><ellipse cx="638.5" cy="109.2" rx="4" ry="1.5" fill="#f4c08a" stroke="#fff" stroke-width="0.5"/><ellipse cx="638.5" cy="111.4" rx="4" ry="1.5" fill="#f4c08a" stroke="#fff" stroke-width="0.5"/>
<path d="M653 104.5 L657.6 104.5 L655.3 107.1 Z" fill="#555"/>
<text x="666" y="110.8" font-size="14" fill="#555" stroke="#555" stroke-width="0.5" font-family="Liberation Sans">%</text>
<text x="685.5" y="108.5" font-size="9.5" font-weight="bold" fill="#555" font-family="Liberation Sans" textLength="13.5" lengthAdjust="spacingAndGlyphs">000</text>
<line x1="706.5" y1="95" x2="706.5" y2="115" stroke="#d6d6d6" stroke-width="1"/>
<text x="719.5" y="104.5" font-size="8.5" font-weight="bold" fill="#555" font-family="Liberation Sans">,0</text><text x="716.5" y="111" font-size="8.5" font-weight="bold" fill="#555" font-family="Liberation Sans">,00</text>
<path d="M714.5 101 H720 M716.8 98.8 L714.5 101 L716.8 103.2" fill="none" stroke="#3e7bbf" stroke-width="1.3"/>
<text x="737" y="104.5" font-size="8.5" font-weight="bold" fill="#555" font-family="Liberation Sans">,00</text><text x="740.5" y="111" font-size="8.5" font-weight="bold" fill="#555" font-family="Liberation Sans">,0</text>
<path d="M735 107.5 H740.5 M738.2 105.3 L740.5 107.5 L738.2 109.7" fill="none" stroke="#3e7bbf" stroke-width="1.3"/>
<rect x="789.5" y="63.5" width="25" height="22" fill="#fff" stroke="#8a8a8a" stroke-width="1"/>
<line x1="795.75" y1="63.5" x2="795.75" y2="85.5" stroke="#9a9a9a" stroke-width="1"/>
<line x1="802" y1="63.5" x2="802" y2="85.5" stroke="#9a9a9a" stroke-width="1"/>
<line x1="808.25" y1="63.5" x2="808.25" y2="85.5" stroke="#9a9a9a" stroke-width="1"/>
<line x1="789.5" y1="69" x2="814.5" y2="69" stroke="#9a9a9a" stroke-width="1"/>
<line x1="789.5" y1="74.5" x2="814.5" y2="74.5" stroke="#9a9a9a" stroke-width="1"/>
<line x1="789.5" y1="80" x2="814.5" y2="80" stroke="#9a9a9a" stroke-width="1"/>
<rect x="796.3" y="64" width="5.2" height="4.5" fill="#d9603b"/><rect x="796.3" y="69.5" width="11.5" height="4.5" fill="#3e7bbf"/><rect x="796.3" y="75" width="7.5" height="4.5" fill="#d9603b"/><rect x="796.3" y="80.5" width="3.5" height="4.5" fill="#3e7bbf"/>
<rect x="802.5" y="78.5" width="14.5" height="12.5" fill="#fff" stroke="#777" stroke-width="1"/>
<path d="M806.5 83 H813 M806.5 86 H813 M811.5 81 L808 88" stroke="#444" stroke-width="1"/>
<rect x="880.5" y="64.5" width="22.5" height="19" fill="#fff" stroke="#8a8a8a" stroke-width="1"/>
<rect x="886" y="69" width="17" height="14.5" fill="#c3d3e8"/>
<line x1="886" y1="64.5" x2="886" y2="83.5" stroke="#9a9a9a" stroke-width="1"/>
<line x1="891.5" y1="64.5" x2="891.5" y2="83.5" stroke="#9a9a9a" stroke-width="1"/>
<line x1="897" y1="64.5" x2="897" y2="83.5" stroke="#9a9a9a" stroke-width="1"/>
<line x1="880.5" y1="69" x2="903" y2="69" stroke="#9a9a9a" stroke-width="1"/>
<line x1="880.5" y1="73.75" x2="903" y2="73.75" stroke="#9a9a9a" stroke-width="1"/>
<line x1="880.5" y1="78.5" x2="903" y2="78.5" stroke="#9a9a9a" stroke-width="1"/>
<path d="M898 78 L906.5 69.5 L907.5 70.5 L907.5 73 L900.5 80 Z" fill="#676767"/>
<path d="M887 91 C888 86.5 891 82.5 895 81 L899 84.5 C898 88.5 893 91 887 91 Z" fill="#3e7bbf" stroke="#fff" stroke-width="0.7"/>
<rect x="952.5" y="64.5" width="23.5" height="19" fill="#fff" stroke="#8a8a8a" stroke-width="1"/>
<rect x="957" y="69" width="14.5" height="10" fill="#c3d3e8"/>
<line x1="957" y1="64.5" x2="957" y2="83.5" stroke="#9a9a9a" stroke-width="1"/>
<line x1="971.5" y1="64.5" x2="971.5" y2="83.5" stroke="#9a9a9a" stroke-width="1"/>
<line x1="952.5" y1="69" x2="976" y2="69" stroke="#9a9a9a" stroke-width="1"/>
<line x1="952.5" y1="79" x2="976" y2="79" stroke="#9a9a9a" stroke-width="1"/>
<path d="M969 78 L977.5 69.5 L978.5 70.5 L978.5 73 L971.5 80 Z" fill="#676767"/>
<path d="M958 90 C959 85.5 962 81.5 966 80 L970 83.5 C969 87.5 964 90 958 90 Z" fill="#3e7bbf" stroke="#fff" stroke-width="0.7"/>
<path d="M837.5 114.5 L841.5 114.5 L839.5 117.1 Z" fill="#555"/>
<path d="M916.5 114.5 L920.5 114.5 L918.5 117.1 Z" fill="#555"/>
<path d="M982 114.5 L986 114.5 L984.0 117.1 Z" fill="#555"/>
<rect x="1000.5" y="61.5" width="6" height="13.5" fill="#fff" stroke="#777" stroke-width="1"/>
<line x1="1000.5" y1="66" x2="1006.5" y2="66" stroke="#777" stroke-width="1"/>
<line x1="1000.5" y1="70.5" x2="1006.5" y2="70.5" stroke="#777" stroke-width="1"/>
<rect x="1006.5" y="66" width="8" height="4.5" fill="#fff" stroke="#777" stroke-width="1"/>
<line x1="1010.5" y1="66" x2="1010.5" y2="70.5" stroke="#777" stroke-width="1"/>
<path d="M1001 68.3 H1007 M1003 66.3 L1001 68.3 L1003 70.3" fill="none" stroke="#3e6fb0" stroke-width="1.2"/>
<path d="M1061 68 L1065.6 68 L1063.3 70.6 Z" fill="#555"/>
<rect x="1000.5" y="82.5" width="6" height="14.5" fill="#fff" stroke="#777" stroke-width="1"/>
<line x1="1000.5" y1="87.5" x2="1006.5" y2="87.5" stroke="#777" stroke-width="1"/>
<line x1="1000.5" y1="92" x2="1006.5" y2="92" stroke="#777" stroke-width="1"/>
<rect x="1004.5" y="87" width="3.5" height="5" fill="#fff" stroke="#777" stroke-width="0.9"/>
<path d="M1008.5 87 L1014 92.5 M1014 87 L1008.5 92.5" stroke="#e0443a" stroke-width="1.3"/>
<path d="M1078.5 90 L1083.1 90 L1080.8 92.6 Z" fill="#555"/>
<rect x="1000.5" y="106.5" width="13" height="12" fill="#fff" stroke="#777" stroke-width="1"/>
<line x1="1000.5" y1="110.5" x2="1013.5" y2="110.5" stroke="#aaa" stroke-width="1"/>
<line x1="1000.5" y1="114.5" x2="1013.5" y2="114.5" stroke="#aaa" stroke-width="1"/>
<line x1="1004.8" y1="106.5" x2="1004.8" y2="118.5" stroke="#aaa" stroke-width="1"/>
<line x1="1009.2" y1="106.5" x2="1009.2" y2="118.5" stroke="#aaa" stroke-width="1"/>
<rect x="1004.5" y="110.5" width="4.8" height="4" fill="#3e6fb0"/>
<path d="M1000.5 104.2 H1013.5 M1000.5 103 V105.5 M1013.5 103 V105.5" stroke="#3e7bbf" stroke-width="0.9"/>
<path d="M1056.5 111 L1061.1 111 L1058.8 113.6 Z" fill="#555"/>
<path d="M1112.5 62.5 H1100 L1106.5 68 L1100 74 H1113" fill="none" stroke="#333" stroke-width="1.6"/>
<path d="M1120 68.5 L1124.6 68.5 L1122.3 71.1 Z" fill="#555"/>
<rect x="1100.5" y="82.5" width="12.5" height="14.5" fill="#fff" stroke="#666" stroke-width="1"/><rect x="1100.5" y="82.5" width="12.5" height="2.5" fill="#777"/>
<path d="M1106.75 86.5 V94 M1103.5 91 L1106.75 94.2 L1110 91" fill="none" stroke="#3e7bbf" stroke-width="1.5"/>
<path d="M1118 90 L1122.6 90 L1120.3 92.6 Z" fill="#555"/>
<path d="M1101 113 L1108.5 105.5 L1112.5 109.5 L1106 116 L1103.5 116 Z" fill="#e26a86"/><path d="M1101.5 117.5 H1112.5" stroke="#666" stroke-width="0.9"/>
<path d="M1118 111 L1122.6 111 L1120.3 113.6 Z" fill="#555"/>
<text x="1134.2" y="75.2" font-size="15" font-weight="bold" fill="#3e7bbf" font-family="Liberation Sans">A</text>
<text x="1135.3" y="88.2" font-size="15" font-weight="bold" fill="#9b59b6" font-family="Liberation Sans" textLength="8.5" lengthAdjust="spacingAndGlyphs">Z</text>
<path d="M1146 70 H1162 L1156 77 V83.5 L1152 83.5 V77 Z" fill="#777"/>
<circle cx="1207" cy="71" r="7.6" fill="#fff" stroke="#3e6fb0" stroke-width="2.2"/><path d="M1201.5 76.5 L1192.5 86.5" stroke="#3e6fb0" stroke-width="2.6" stroke-linecap="round"/>
<path d="M1162.5 114.5 L1166.5 114.5 L1164.5 117.1 Z" fill="#555"/>
<path d="M1235 114.5 L1239 114.5 L1237.0 117.1 Z" fill="#555"/>
<path d="M1262 137 L1266 133 L1270 137" fill="none" stroke="#555" stroke-width="1.3"/>
<path d="M86.5 161.5 L92.5 161.5 L89.5 165 Z" fill="#666"/>
<rect x="113.5" y="159.4" width="1.3" height="1.3" fill="#999"/>
<rect x="113.5" y="163.4" width="1.3" height="1.3" fill="#999"/>
<rect x="113.5" y="167.4" width="1.3" height="1.3" fill="#999"/>
<path d="M142 159.5 L150.5 168 M150.5 159.5 L142 168" stroke="#c4c4c4" stroke-width="1.2"/>
<path d="M174.5 163.5 L178.5 167.5 L186 158.5" fill="none" stroke="#c4c4c4" stroke-width="1.5"/>
<text x="207.5" y="168" font-size="12.5" font-style="italic" font-weight="bold" fill="#555" font-family="Liberation Serif">f</text><text x="212" y="168" font-size="9.5" font-style="italic" font-weight="bold" fill="#555" font-family="Liberation Serif">x</text>
<path d="M1263.5 161.5 L1267.5 165.5 L1271.5 161.5" fill="none" stroke="#666" stroke-width="1.3"/>
<path d="M149.5 248 V255 M147.8 253 L149.5 255.2 L151.2 253" fill="none" stroke="#444" stroke-width="1"/><path d="M151.5 246.5 H158.8 L156.2 250 V253.5 H154.2 V250 Z" fill="#555"/>
<circle cx="1240.9" cy="241.5" r="3.6" fill="none" stroke="#9c9c9c" stroke-width="2.6"/><rect x="1239.30" y="235.30" width="3.2" height="3" fill="#9c9c9c" transform="rotate(0 1240.9 241.5)"/><rect x="1239.30" y="235.30" width="3.2" height="3" fill="#9c9c9c" transform="rotate(60 1240.9 241.5)"/><rect x="1239.30" y="235.30" width="3.2" height="3" fill="#9c9c9c" transform="rotate(120 1240.9 241.5)"/><rect x="1239.30" y="235.30" width="3.2" height="3" fill="#9c9c9c" transform="rotate(180 1240.9 241.5)"/><rect x="1239.30" y="235.30" width="3.2" height="3" fill="#9c9c9c" transform="rotate(240 1240.9 241.5)"/><rect x="1239.30" y="235.30" width="3.2" height="3" fill="#9c9c9c" transform="rotate(300 1240.9 241.5)"/>
<path d="M1255.5 240 L1262 240 L1258.75 243.5 Z" fill="#666"/>
<circle cx="1259.5" cy="274.5" r="3.6" fill="none" stroke="#3e6fb0" stroke-width="1.5"/><path d="M1257 277 L1253.5 281" stroke="#3e6fb0" stroke-width="1.7" stroke-linecap="round"/>
<path d="M1253 303 H1264 L1260 307.5 V312.5 H1257 V307.5 Z" fill="#8a8a8a"/>
<path d="M985.5 494.5 H995.5 L991.5 499 V504 H989.5 V499 Z" fill="#8a8a8a"/>
<path d="M1131.5 495 V504 M1134 495 V504 M1136.5 495 V504 M1139 495 V504" stroke="#8a8a8a" stroke-width="1.3"/>
<path d="M986 567 H995.5 M986 569.5 H995.5 M986 572 H995.5 M986 574.5 H995.5" stroke="#8a8a8a" stroke-width="1.3"/>
<path d="M1141 567 H1133 L1137.5 571 L1133 575 H1141" fill="none" stroke="#8a8a8a" stroke-width="1.2"/>
<rect x="1015.5" y="676.5" width="11" height="10" fill="none" stroke="#666" stroke-width="1"/>
<line x1="1019.17" y1="676.5" x2="1019.17" y2="686.5" stroke="#666" stroke-width="1"/>
<line x1="1022.83" y1="676.5" x2="1022.83" y2="686.5" stroke="#666" stroke-width="1"/>
<line x1="1015.5" y1="679.83" x2="1026.5" y2="679.83" stroke="#666" stroke-width="1"/>
<line x1="1015.5" y1="683.17" x2="1026.5" y2="683.17" stroke="#666" stroke-width="1"/>
<rect x="1050.5" y="676.5" width="11" height="10" fill="none" stroke="#666" stroke-width="1"/><rect x="1053" y="678.5" width="6" height="6" fill="none" stroke="#666" stroke-width="0.9"/>
<path d="M1086.5 686.5 V676.5 H1097.5 V686.5 M1086.5 686.5 H1090 M1094 686.5 H1097.5 M1090 676.5 V682.5 H1094 V676.5" fill="none" stroke="#666" stroke-width="1"/>
</svg>
</body></html>
